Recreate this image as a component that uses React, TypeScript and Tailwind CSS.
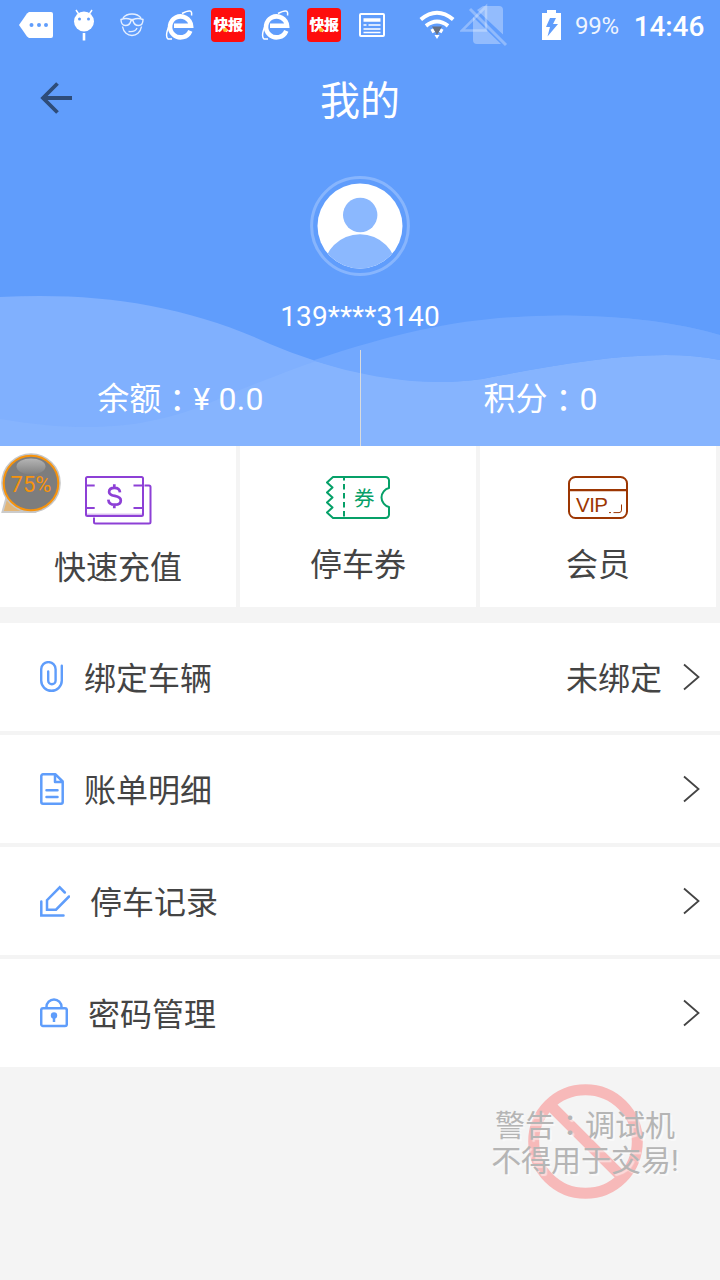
import type { ReactNode } from "react";

const PaperclipIcon = () => (
  <svg className="w-[24px] h-[32px]" viewBox="0 0 24 32" fill="none" stroke="#5f9dfb" strokeWidth="2.400" strokeLinecap="round">
    <path d="M8.200 10.500V19.500a3.700 3.700 0 0 0 7.400 0V8.300a7.200 7.200 0 0 0-14.400 0V19.500a10.300 10.300 0 0 0 20.600 0V4.800" />
  </svg>
);

const BillIcon = () => (
  <svg className="w-[24px] h-[32px]" viewBox="0 0 24 32" fill="none" stroke="#5f9dfb" strokeWidth="2.500" strokeLinecap="round" strokeLinejoin="round">
    <path d="M15.500 1.300H3a1.700 1.700 0 0 0-1.700 1.700V29a1.700 1.700 0 0 0 1.700 1.700H21a1.700 1.700 0 0 0 1.700-1.700V8.500ZM15 1.500V9h7.500M6.500 17.200h11M6.500 24h11" />
  </svg>
);

const EditIcon = () => (
  <svg className="w-[30px] h-[32px]" viewBox="0 0 30 32" fill="none" stroke="#5f9dfb" strokeWidth="2.500" strokeLinecap="round">
    <path d="M1.300 16.400V30.500H23.500M24.800 7.500L19.700 2.300 7 15.200V24.700H16L29 11.500" />
  </svg>
);

const LockIcon = () => (
  <svg className="w-[28px] h-[32px]" viewBox="0 0 28 32" fill="none" stroke="#5f9dfb" strokeWidth="2.500">
    <rect x="1.200" y="11.300" width="25.600" height="17.700" rx="1.800" />
    <path d="M6.500 11.500V10a7.500 7.500 0 0 1 15 0v1.500" />
    <circle cx="14" cy="18.500" r="3.200" fill="#5f9dfb" stroke="none" />
    <path d="M14 19v6" />
  </svg>
);

const RechargeIcon = () => (
  <svg className="w-[68px] h-[49px]" viewBox="0 0 68 49" fill="none" stroke="#8d40d6" strokeWidth="2">
    <rect x="2" y="1" width="57" height="39" rx="1.500" />
    <path d="M2 38.200H59" strokeWidth="1" opacity=".5" />
    <path d="M2 9.500h8.700M2 32h8.700M59 9.500h-9.500M59 32h-9.500" />
    <path d="M60.500 9.500H65a1.500 1.500 0 0 1 1.500 1.500V46a1.500 1.500 0 0 1-1.500 1.500H11.500a1.500 1.500 0 0 1-1.500-1.500V41.500" />
    <path d="M36 16.300c-.3-3-2.300-4.500-5.500-4.500s-5.400 1.600-5.400 4.100c0 5.600 11.700 2.400 11.700 8.500 0 2.600-2.400 4.300-6 4.300-4 0-6.200-1.800-6.500-5.100M30.300 8.300v3.500M30.300 28.700v3.500" strokeWidth="2.700" />
  </svg>
);

const CouponIcon = () => (
  <svg className="w-[66px] h-[43px]" viewBox="0 0 66 43" fill="none" stroke="#06a068" strokeWidth="2">
    <path d="M8 1H60.500a3.500 3.500 0 0 1 3.500 3.500V12c-4 .8-7.500 4.800-7.500 9.500S60 30.200 64 31V38.500A3.500 3.500 0 0 1 60.500 42H8L2 36.500l5.500-5L2 26.500l5.500-5L2 16.500l5.500-5L2 6.500Z" strokeLinejoin="round" />
    <path d="M19 2v40" strokeDasharray="5.500 3.500" strokeDashoffset="3" />
    <text x="29" y="29.500" fontSize="20.500" fontFamily="Noto Sans CJK SC, sans-serif" fill="#06a068" stroke="none">券</text>
  </svg>
);

const VipIcon = () => (
  <svg className="w-[60px] h-[43px]" viewBox="0 0 60 43" fill="none" stroke="#9c3602" strokeWidth="2">
    <rect x="1" y="1" width="58" height="41" rx="6.500" />
    <path d="M1 14.200H59" strokeWidth="2.300" />
    <path d="M41 36.600h2M45.500 36.600h5.500a2.500 2.500 0 0 0 2.500-2.500V28.500" strokeWidth="1" />
    <text x="8" y="35.500" fontSize="20.500" fontFamily="Liberation Sans, sans-serif" textLength="32" fill="#9c3602" stroke="none">VIP</text>
  </svg>
);

const BrowserIcon = () => (
  <svg className="w-[32px] h-[34px]" viewBox="0 0 32 34" fill="none" stroke="#fff">
    <path d="M26.300 22.800A10.500 10.500 0 1 1 27 17.800H10" strokeWidth="4.600" />
    <path d="M18 5.500Q29-.5 27.500 7.500" strokeWidth="1.500" />
    <path d="M5.500 17Q.5 28 4 31H8" strokeWidth="1.500" />
  </svg>
);

const NewsIcon = () => (
  <div className="relative w-[34px] h-[34px] rounded-[4px] bg-[#fe0d0d] flex items-center justify-center">
    <span className="text-[15px] leading-none font-black tracking-[-0.5px] text-white whitespace-nowrap">快报</span>
    <i className="absolute left-[12px] top-[20px] w-[4px] h-[4px] rounded-full bg-[#fcbd25]" />
  </div>
);

const notifications: ReactNode[] = [
  <svg className="w-[34px] h-[26px]" viewBox="0 0 34 26">
    <path d="M10 0H32a2 2 0 0 1 2 2V24a2 2 0 0 1-2 2H10L8 24.500 0 13 8 1.500Z" fill="#fff" />
    <path d="M10.500 13a2 2 0 1 0 4 0 2 2 0 1 0-4 0M18 13a2 2 0 1 0 4 0 2 2 0 1 0-4 0M25 13a2 2 0 1 0 4 0 2 2 0 1 0-4 0" fill="#609dfc" />
  </svg>,
  <svg className="w-[22px] h-[32px]" viewBox="0 0 22 32" fill="#fff">
    <circle cx="11" cy="12.500" r="10" />
    <path d="M3 1l3 4.500M19 1l-3 4.500" stroke="#fff" strokeWidth="1.500" />
    <path d="M11 24v7.500" stroke="#fff" strokeWidth="2.600" />
    <circle cx="6.500" cy="10" r="1.500" fill="#609dfc" />
    <circle cx="15.500" cy="10" r="1.500" fill="#609dfc" />
  </svg>,
  <svg className="w-[24px] h-[24px]" viewBox="0 0 24 24" fill="none" stroke="#e5efff" strokeWidth="1.400">
    <path d="M3 5C7-.3 17-.3 21 5" />
    <path d="M1 6.500Q6 4.500 11 6.500H13Q18 4.500 23 6.500C23 10 21.500 12.500 18.500 12.500S13.500 10 13 7.500H11C10.500 10 8.500 12.500 5.500 12.500S1 10 1 6.500Z" />
    <path d="M2.500 13.500C4.500 25.500 19.500 25.500 21.500 13.500M8.500 18.500C12.500 19 16 17.500 17 15" />
  </svg>,
  <BrowserIcon />,
  <NewsIcon />,
  <BrowserIcon />,
  <NewsIcon />,
  <svg className="w-[26px] h-[24px]" viewBox="0 0 26 24" fill="none" stroke="#fff">
    <rect x="1" y="1" width="24" height="22" rx="1" strokeWidth="2" />
    <path d="M4.500 7H21.500" strokeWidth="3.500" />
    <path d="M4.500 12h3M9.500 12h12M4.500 16h17M4.500 19.500h17" strokeWidth="1.500" />
  </svg>,
];

const StatusBar = () => (
  <div className="h-[50px] pl-3 flex items-center text-white">
    {notifications.map((icon, i) => (
      <div key={i} className="w-12 flex justify-center">{icon}</div>
    ))}
    {/* wifi */}
    <svg className="w-[36px] h-[30px] ml-[23px]" viewBox="0 0 36 30" fill="none" stroke="#fff" strokeWidth="4">
      <path d="M1.800 9.500Q18-4 34.200 9.500M7 15.800q11-8.500 22 0" />
      <path d="M12.500 21.500l2.800-1.600M23.500 21.500l-2.800-1.600" />
      <path d="M15.500 25h5L18 29Z" fill="#fff" stroke="none" />
      <path d="M13 16.500h10L18 25Z" fill="#666f80" stroke="none" />
    </svg>
    {/* no signal */}
    <svg className="w-[48px] h-[44px] ml-[5px]" viewBox="0 0 48 44" fill="#fff">
      <path d="M23 3H39q4 0 4 4V31.500L17 7ZM13 14L41 41H17q-4 0-4-4Z" opacity=".32" />
      <path d="M10 6L46 42" stroke="#fff" strokeWidth="3" opacity=".3" />
      <path d="M2 27.500H26V3.500Z" fill="none" stroke="#fff" strokeWidth="2.500" opacity=".3" />
    </svg>
    <svg className="w-[19px] h-[30px] ml-[34px]" viewBox="0 0 19 30">
      <path d="M5 0H14V3H19V30H0V3H5Z" fill="#fff" />
      <path d="M8 8H14L11 14H16L5.500 26.500 8 17H4Z" fill="#609dfc" />
    </svg>
    <span className="ml-[14px] mt-[2px] text-[24px] leading-none opacity-90 tracking-[-0.3px]">99%</span>
    <span className="ml-[15px] mt-[4px] text-[28px] leading-none font-medium tracking-[-0.1px]">14:46</span>
  </div>
);

const Avatar = () => (
  <svg className="w-[100px] h-[100px]" viewBox="0 0 100 100">
    <defs>
      <clipPath id="face">
        <circle cx="50" cy="50" r="42.500" />
      </clipPath>
    </defs>
    <circle cx="50" cy="50" r="48.400" fill="none" stroke="#87b5fd" strokeWidth="3" />
    <g clipPath="url(#face)">
      <rect width="100" height="100" fill="#fff" />
      <circle cx="50.200" cy="39" r="17.200" fill="#8bb8fe" />
      <circle cx="50" cy="95" r="36.800" fill="#8bb8fe" />
    </g>
  </svg>
);

// the TC face centres the full-width colon in its cell
const Colon = ({ className = "" }: { className?: string }) => (
  <span className={`font-['Noto_Sans_CJK_TC',sans-serif] ${className}`}>：</span>
);

const Header = () => (
  <header className="relative h-[446px] bg-[#609dfc] text-white">
    <svg className="absolute inset-0 w-[720px] h-[446px]" viewBox="0 0 720 446">
      <path d="M0 297C100 292 185 305 270 344C340 374 420 388 482 379C545 367 610 355 665 355Q695 355 720 360V446H0Z" fill="#80b0fe" />
      <path d="M0 419C90 434 155 429 225 396C350 345 440 316 565 315.500Q655 316 720 335V446H0Z" fill="#9bc2ff" opacity=".22" />
      <path d="M313 360.500C420 325 480 316 565 315.500Q655 316 720 335V360Q695 355 665 355C610 355 545 367 482 379C430 387 370 379 313 360.500Z" fill="#72a8fe" />
    </svg>
    <div className="relative flex flex-col h-full">
      <StatusBar />
      <div className="relative h-[98px] flex justify-center items-center">
        <svg className="absolute left-[40px] top-[32px] w-[32px] h-[32px]" viewBox="0 0 32 32" fill="none" stroke="#2e4c79" strokeWidth="3.800">
          <path d="M32 16H3M17.500 1.500L3 16l14.500 14.500" />
        </svg>
        <h1 className="mt-[5px] text-[40px] leading-none">我的</h1>
      </div>
      <div className="flex flex-col items-center pt-[28px]">
        <Avatar />
        <p className="mt-[27px] text-[28px] leading-[28px] tracking-[0.1px]">139****3140</p>
      </div>
      <div className="mt-auto h-[96px] flex text-[32px] leading-[48px]">
        <div className="w-[361px] flex items-center justify-center border-r border-[#d9dbdd]">
          <p className="pb-px pl-px">余额<Colon className="relative top-[2px]" /><span className="tracking-[0.3px]">¥ 0.0</span></p>
        </div>
        <div className="flex-1 flex items-center justify-center">
          <p className="pb-px">积分<Colon className="relative top-[2px]" />0</p>
        </div>
      </div>
    </div>
  </header>
);

const shortcuts = [
  { label: "快速充值", icon: RechargeIcon, gap: "mt-[27px]" },
  { label: "停车券", icon: CouponIcon, gap: "mt-[30px]" },
  { label: "会员", icon: VipIcon, gap: "mt-[30px]" },
];

const rows = [
  { label: "绑定车辆", icon: PaperclipIcon, value: "未绑定" },
  { label: "账单明细", icon: BillIcon },
  { label: "停车记录", icon: EditIcon },
  { label: "密码管理", icon: LockIcon },
];

const BatteryBubble = () => (
  <svg className="absolute left-0 top-[450px] w-[64px] h-[66px]" viewBox="0 0 64 66">
    <defs>
      <linearGradient id="gloss" x1="0" y1="0" x2="0" y2="1">
        <stop offset="0" stopColor="#b5b5b5" />
        <stop offset="1" stopColor="#808080" />
      </linearGradient>
    </defs>
    <path d="M8 42L2.500 62H34Z" fill="#e2b678" stroke="#cbcbcb" strokeWidth="2" />
    <circle cx="31" cy="33" r="29.800" fill="#c6c6c6" />
    <circle cx="31" cy="33" r="27.300" fill="#7d7d7d" stroke="#f7930c" strokeWidth="2" />
    <ellipse cx="31" cy="16.500" rx="14.500" ry="8" fill="url(#gloss)" />
    <text x="31" y="42" textAnchor="middle" fontSize="22" fontFamily="Roboto, sans-serif" fill="#f7930c">75%</text>
  </svg>
);

const DebugWarning = () => (
  <div className="absolute left-[485px] top-[1080px] w-[200px] h-[124px] flex items-center justify-center">
    <svg className="absolute left-[43px] top-[4px] w-[115px] h-[115px]" viewBox="0 0 115 115" fill="none" stroke="#f7b9b9" strokeWidth="11">
      <circle cx="57.500" cy="57.500" r="51.800" />
      <path d="M22 21L93 92" />
    </svg>
    <p className="relative text-center text-[30px] leading-[35px] text-[#b5b5b5] whitespace-nowrap [text-shadow:2px_2px_1px_#ffffff80]">
      警告<Colon />调试机
      <br />
      不得用于交易!
    </p>
  </div>
);

export default function App() {
  return (
    <div className="relative w-[720px] h-[1280px] overflow-hidden bg-[#f4f4f4] text-[#444] font-[Roboto,'Noto_Sans_CJK_SC',sans-serif]">
      <Header />

      <div className="flex gap-1 pr-1 h-[161px]">
        {shortcuts.map((item) => (
          <div key={item.label} className="flex-1 bg-white flex flex-col items-center pt-[30px]">
            <item.icon />
            <span className={`${item.gap} text-[32px] leading-[32px]`}>{item.label}</span>
          </div>
        ))}
      </div>

      <div className="mt-4 flex flex-col gap-1">
        {rows.map((row) => (
          <div key={row.label} className="h-[108px] bg-white pl-[40px] pr-[20px] flex items-center text-[32px]">
            <row.icon />
            <span className="ml-[20px] mt-[4px] leading-[32px]">{row.label}</span>
            {row.value && <span className="ml-auto mr-[21px] mt-[4px] leading-[32px]">{row.value}</span>}
            <svg className={`w-[17px] h-[28px] ${row.value ? "" : "ml-auto"}`} viewBox="0 0 17 28" fill="none" stroke="#444" strokeWidth="1.800">
              <path d="M1 1.500L15.500 14 1 26.500" />
            </svg>
          </div>
        ))}
      </div>

      <BatteryBubble />
      <DebugWarning />
    </div>
  );
}
